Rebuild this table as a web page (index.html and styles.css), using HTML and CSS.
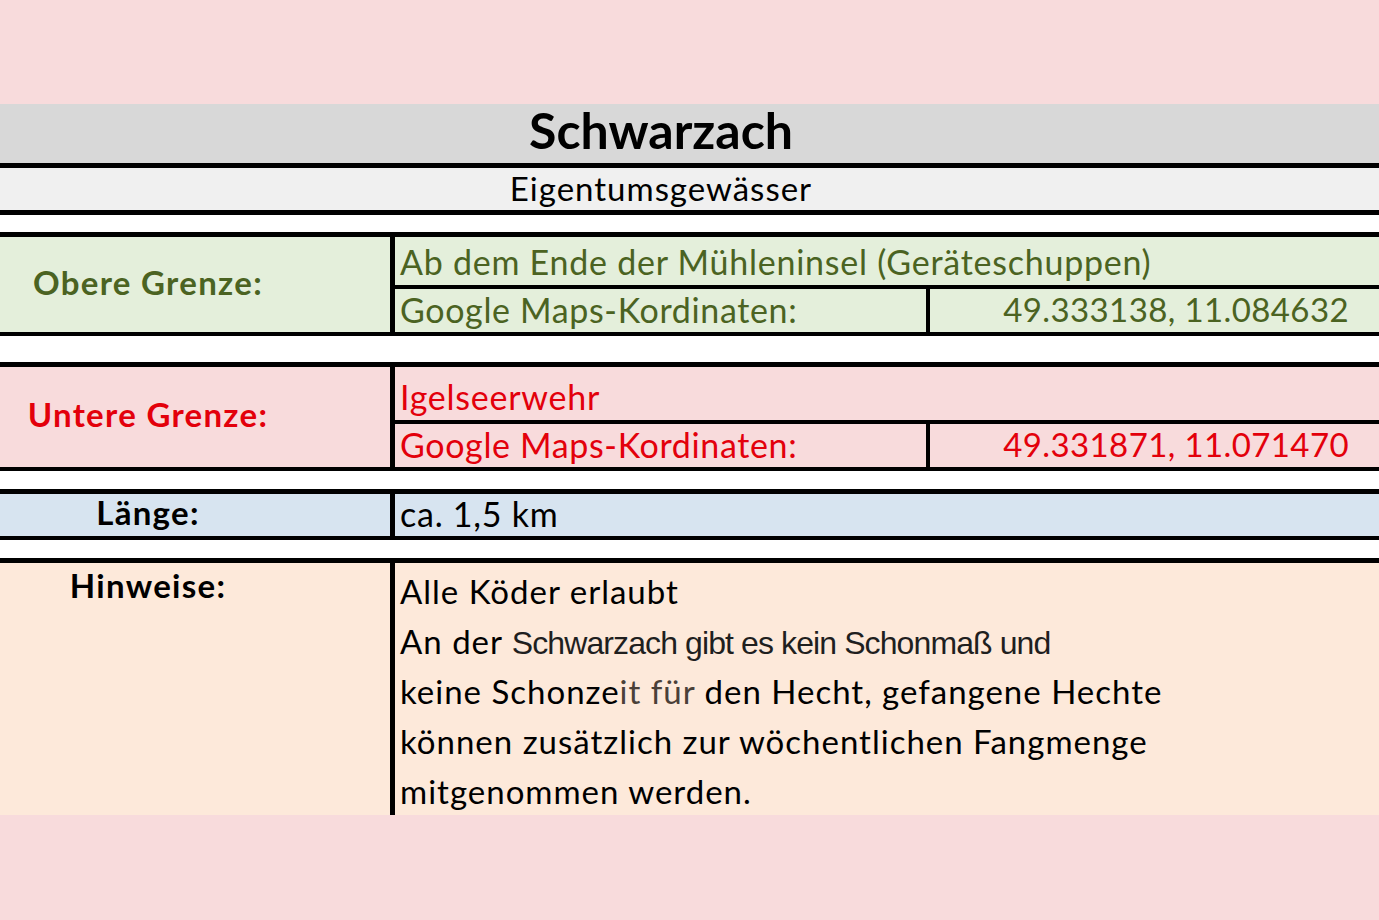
FILE: index.html
```html
<!DOCTYPE html>
<html lang="de">
<head>
<meta charset="utf-8">
<title>Schwarzach</title>
<link rel="stylesheet" href="styles.css">
</head>
<body>
<div class="sheet">
  <div class="title-row"><span>Schwarzach</span></div>
  <div class="sub-row"><span>Eigentumsgewässer</span></div>
  <div class="gap gap-1"></div>

  <div class="block green">
    <div class="label">Obere Grenze:</div>
    <div class="values">
      <div class="vrow vrow-a1">Ab dem Ende der Mühleninsel (Geräteschuppen)</div>
      <div class="vrow vrow-b1 split">
        <div class="cell-left">Google Maps-Kordinaten:</div>
        <div class="cell-right">49.333138, 11.084632</div>
      </div>
    </div>
  </div>
  <div class="gap gap-2"></div>

  <div class="block red">
    <div class="label">Untere Grenze:</div>
    <div class="values">
      <div class="vrow vrow-a2">Igelseerwehr</div>
      <div class="vrow vrow-b2 split">
        <div class="cell-left">Google Maps-Kordinaten:</div>
        <div class="cell-right">49.331871, 11.071470</div>
      </div>
    </div>
  </div>
  <div class="gap gap-3"></div>

  <div class="block blue">
    <div class="label">Länge:</div>
    <div class="values">
      <div class="vrow vrow-len">ca. 1,5 km</div>
    </div>
  </div>
  <div class="gap gap-4"></div>

  <div class="block peach">
    <div class="label label-top">Hinweise:</div>
    <div class="values notes">
      <div class="line">Alle Köder erlaubt</div>
      <div class="line">An der <span class="pasted">Schwarzach gibt es kein Schonmaß und</span></div>
      <div class="line">keine Schonze<span class="faded">it für</span> den Hecht, gefangene Hechte</div>
      <div class="line">können zusätzlich zur wöchentlichen Fangmenge</div>
      <div class="line">mitgenommen werden.</div>
    </div>
  </div>
</div>
</body>
</html>
```

FILE: styles.css
```css
* { box-sizing: border-box; }

html, body {
  margin: 0;
  padding: 0;
}

body {
  background: #f8dbdc;
  font-family: Lato, "Open Sans", sans-serif;
  color: #000;
  width: 1379px;
  height: 920px;
  overflow: hidden;
}

.sheet {
  padding-top: 104px;
}

.title-row {
  height: 64px;
  background: #d8d8d8;
  border-bottom: 5px solid #000;
  display: flex;
  align-items: center;
  justify-content: center;
  padding-right: 57px;
  padding-bottom: 7px;
  font-weight: 700;
  font-size: 50px;
  line-height: 1;
}

.sub-row {
  height: 47px;
  background: #f0f0f0;
  border-bottom: 5px solid #000;
  display: flex;
  align-items: center;
  justify-content: center;
  padding-right: 57px;
  padding-bottom: 2px;
  font-size: 33px;
  letter-spacing: 1px;
  line-height: 1;
}

.gap { background: #fff; }
.gap-1 { height: 17px; }
.gap-2 { height: 26px; }
.gap-3 { height: 18px; }
.gap-4 { height: 18px; }

.block {
  display: flex;
  border-top: 5px solid #000;
  border-bottom: 4px solid #000;
}

.label {
  width: 395px;
  flex: none;
  border-right: 5px solid #000;
  padding-right: 94px;
  padding-bottom: 5px;
  display: flex;
  align-items: center;
  justify-content: center;
  font-weight: 700;
  font-size: 33px;
  line-height: 1;
  letter-spacing: 1.3px;
}

.values {
  flex: 1;
  display: flex;
  flex-direction: column;
}

.vrow {
  display: flex;
  align-items: center;
  padding-left: 5px;
  font-size: 34px;
  letter-spacing: 0.75px;
  line-height: 1;
}

.vrow + .vrow { border-top: 4px solid #000; }

.vrow-a1 { height: 48px; padding-top: 2px; }
.vrow-b1 { height: 47px; }
.vrow-a2 { height: 53px; padding-top: 7px; }
.vrow-b2 { height: 47px; }
.vrow-len { height: 42px; padding-bottom: 3px; }

.split { padding-left: 0; align-items: stretch; }

.cell-left {
  width: 535px;
  flex: none;
  padding-left: 5px;
  padding-bottom: 2px;
  border-right: 4px solid #000;
  display: flex;
  align-items: center;
  letter-spacing: 0.65px;
}

.cell-right {
  flex: 1;
  display: flex;
  align-items: center;
  justify-content: flex-end;
  padding-right: 30px;
  padding-bottom: 2px;
  font-size: 33px;
  letter-spacing: 0.4px;
}

.green { background: #e4efdb; color: #4b6322; }
.red { background: #f8dbdc; color: #e3000b; }
.blue { background: #d7e4f0; }
.peach {
  background: #fde9da;
  border-bottom: none;
  height: 257px;
}

.label-top {
  align-items: flex-start;
  padding-top: 6px;
  padding-bottom: 0;
}

.notes {
  padding-left: 5px;
  padding-top: 3px;
  font-size: 33px;
  letter-spacing: 1px;
}

.line {
  height: 50px;
  line-height: 50px;
  white-space: nowrap;
}

.pasted {
  font-family: "Liberation Sans", Arial, sans-serif;
  font-size: 32px;
  letter-spacing: -0.9px;
  color: #1f1f1f;
}

.faded { color: #4a4038; }
```
